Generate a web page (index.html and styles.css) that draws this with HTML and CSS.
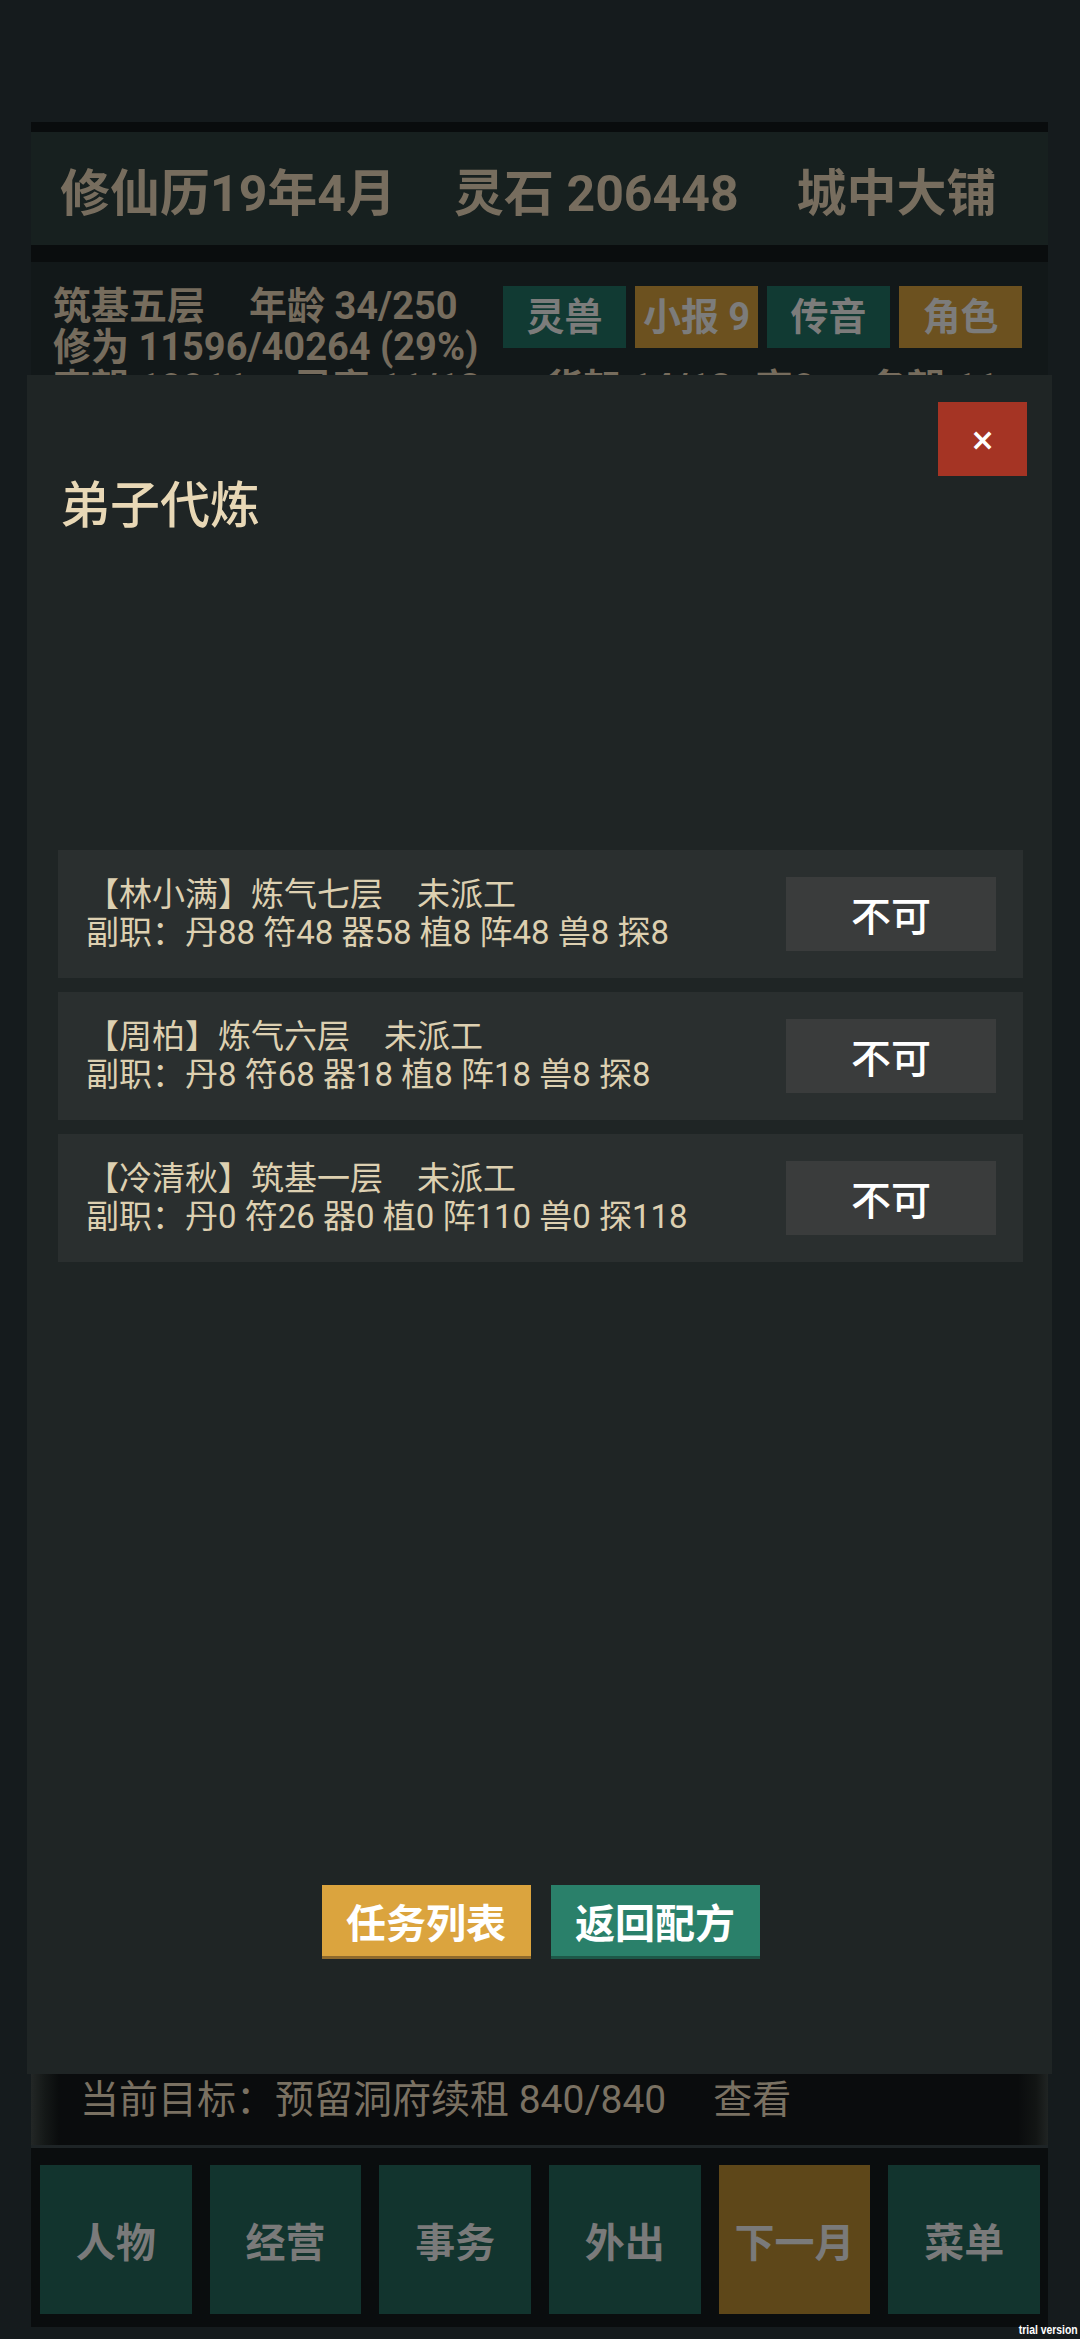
FILE: index.html
```html
<!DOCTYPE html>
<html lang="zh-CN">
<head>
<meta charset="utf-8">
<title>弟子代炼</title>
<link rel="stylesheet" href="styles.css">
</head>
<body>
<div class="app">
  <div class="top-space"></div>
  <div class="top-bar"></div>
  <div class="header">
    <span>修仙历19年4月</span>
    <span>灵石 206448</span>
    <span>城中大铺</span>
  </div>
  <div class="header-gap"></div>
  <div class="info">
    <div class="info-top">
      <div class="stats">
        <div><span class="realm">筑基五层</span>年龄 34/250</div>
        <div>修为 11596/40264 (29%)</div>
      </div>
      <div class="quick">
        <div class="qbtn teal">灵兽</div>
        <div class="qbtn gold">小报 9</div>
        <div class="qbtn teal">传音</div>
        <div class="qbtn gold">角色</div>
      </div>
    </div>
    <div class="stats-row">
      <span class="c1">声望 10011</span><span class="c2">灵宠 11/18</span><span class="c3">货架 14/18</span><span class="c4">宗0</span><span>名望 11</span>
    </div>
  </div>
  <div class="goal">
    <span class="goal-text">当前目标：预留洞府续租 840/840</span><span class="goal-link">查看</span>
  </div>
  <div class="nav">
    <div class="nbtn">人物</div>
    <div class="nbtn">经营</div>
    <div class="nbtn">事务</div>
    <div class="nbtn">外出</div>
    <div class="nbtn gold">下一月</div>
    <div class="nbtn">菜单</div>
  </div>
  <div class="bottom-space"></div>
</div>

<div class="modal">
  <div class="close">×</div>
  <div class="title">弟子代炼</div>
  <div class="rows">
    <div class="row">
      <div class="row-text">
        <div>【林小满】炼气七层<span class="sp"></span>未派工</div>
        <div>副职：丹88 符48 器58 植8 阵48 兽8 探8</div>
      </div>
      <div class="deny">不可</div>
    </div>
    <div class="row">
      <div class="row-text">
        <div>【周柏】炼气六层<span class="sp"></span>未派工</div>
        <div>副职：丹8 符68 器18 植8 阵18 兽8 探8</div>
      </div>
      <div class="deny">不可</div>
    </div>
    <div class="row">
      <div class="row-text">
        <div>【冷清秋】筑基一层<span class="sp"></span>未派工</div>
        <div>副职：丹0 符26 器0 植0 阵110 兽0 探118</div>
      </div>
      <div class="deny">不可</div>
    </div>
  </div>
  <div class="actions">
    <div class="abtn gold">任务列表</div>
    <div class="abtn teal">返回配方</div>
  </div>
</div>

<div class="watermark">trial version</div>
</body>
</html>
```

FILE: styles.css
```css
html, body {
  margin: 0;
  padding: 0;
}

body {
  width: 1080px;
  height: 2339px;
  overflow: hidden;
  position: relative;
  background: #151b1d;
  font-family: Roboto, "Noto Sans CJK SC", sans-serif;
}

.app {
  display: flex;
  flex-direction: column;
  height: 2339px;
  margin: 0 32px 0 31px;
}

.top-space {
  height: 122px;
  flex: none;
}

.top-bar {
  height: 10px;
  flex: none;
  background: #090c0d;
}

.header {
  height: 113px;
  flex: none;
  background: #17201f;
  display: flex;
  align-items: center;
  gap: 58px;
  padding-left: 29px;
  font-size: 50px;
  font-weight: bold;
  color: #776d5e;
  white-space: nowrap;
}

.header-gap {
  height: 17px;
  flex: none;
  background: #0a0d0e;
}

.info {
  flex: 1;
  overflow: hidden;
  background: #121819;
  padding: 24px 0 0 22px;
  font-size: 38px;
  font-weight: bold;
  line-height: 41px;
  color: #766c5d;
  white-space: nowrap;
}

.info-top {
  display: flex;
}

.stats {
  width: 450px;
}

.realm {
  margin-right: 44px;
}

.quick {
  display: flex;
  gap: 9px;
}

.qbtn {
  width: 123px;
  height: 62px;
  display: flex;
  align-items: center;
  justify-content: center;
  color: #7c7c7b;
  font-size: 38px;
}

.qbtn.teal {
  background: #113a33;
}

.qbtn.gold {
  background: #6c511f;
}

.stats-row span {
  display: inline-block;
}

.stats-row .c1 { width: 241px; }
.stats-row .c2 { width: 251px; }
.stats-row .c3 { width: 210px; }
.stats-row .c4 { width: 114px; }

.goal {
  height: 74px;
  flex: none;
  box-sizing: border-box;
  padding-left: 49px;
  font-size: 39px;
  line-height: 52px;
  color: #7a7162;
  white-space: nowrap;
  background:
    linear-gradient(to right, #232726 0, #141817 14px, #0a0c0d 28px, #0a0c0d calc(100% - 30px), #121514 calc(100% - 12px), #202423 100%);
  border-bottom: 3px solid #1e2426;
}

.goal-link {
  margin-left: 47px;
}

.nav {
  height: 179px;
  flex: none;
  box-sizing: border-box;
  background: #0a0d0e;
  padding: 17px 8px 13px 9px;
  display: grid;
  grid-template-columns: repeat(6, 1fr);
  gap: 18px;
}

.nbtn {
  display: flex;
  align-items: center;
  justify-content: center;
  background: #12342e;
  color: #7a7a7a;
  font-size: 40px;
  font-weight: bold;
}

.nbtn.gold {
  background: #5e4719;
}

.bottom-space {
  height: 12px;
  flex: none;
}

/* Modal */
.modal {
  position: absolute;
  left: 27px;
  top: 375px;
  width: 1025px;
  height: 1699px;
  box-sizing: border-box;
  background: #1f2525;
  padding: 0 29px 115px 31px;
  display: flex;
  flex-direction: column;
}

.close {
  position: absolute;
  top: 27px;
  right: 25px;
  width: 89px;
  height: 74px;
  background: #a53424;
  color: #ffffff;
  font-family: "DejaVu Sans", sans-serif;
  font-size: 30px;
  font-weight: bold;
  display: flex;
  align-items: center;
  justify-content: center;
}

.title {
  margin-top: 101px;
  padding-left: 2px;
  font-size: 50px;
  font-weight: 500;
  line-height: 60px;
  color: #e8d8b6;
}

.rows {
  margin-top: 314px;
  display: flex;
  flex-direction: column;
  gap: 14px;
}

.row {
  height: 128px;
  box-sizing: border-box;
  background: #2a2f2f;
  display: flex;
  align-items: center;
  justify-content: space-between;
  padding: 0 27px 0 28px;
}

.row-text {
  font-size: 33px;
  line-height: 38px;
  color: #ddd0b1;
  white-space: nowrap;
}

.sp {
  display: inline-block;
  width: 34px;
}

.deny {
  width: 210px;
  height: 74px;
  background: #3a3c3c;
  color: #ffffff;
  font-size: 40px;
  font-weight: 500;
  display: flex;
  align-items: center;
  justify-content: center;
}

.actions {
  margin-top: auto;
  display: flex;
  justify-content: center;
  gap: 20px;
}

.abtn {
  width: 209px;
  height: 74px;
  box-sizing: border-box;
  color: #ffffff;
  font-size: 40px;
  font-weight: bold;
  display: flex;
  align-items: center;
  justify-content: center;
}

.abtn.gold {
  background: #dba43e;
  border-bottom: 3px solid #8f6a2c;
}

.abtn.teal {
  background: #2a806a;
  border-bottom: 3px solid #1d5848;
}

.watermark {
  position: absolute;
  right: 2px;
  bottom: 2px;
  font-family: "Liberation Sans", sans-serif;
  font-size: 13px;
  font-weight: bold;
  color: #ffffff;
  transform: scaleX(0.8);
  transform-origin: right bottom;
}
```
